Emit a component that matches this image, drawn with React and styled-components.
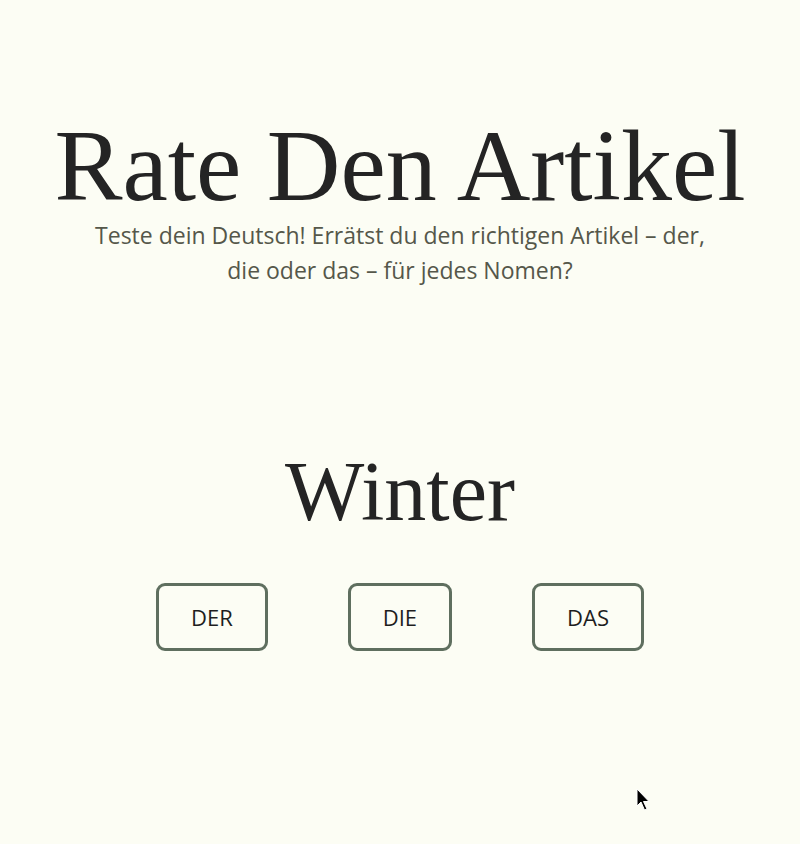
import styled, { createGlobalStyle } from "styled-components";

const GlobalStyle = createGlobalStyle`
  html, body {
    margin: 0;
    padding: 0;
    background: #fcfdf4;
  }
`;

const Page = styled.main`
  min-height: 844px;
  display: flex;
  flex-direction: column;
  align-items: center;
  padding-top: 116px;
  box-sizing: border-box;
  position: relative;
`;

const Title = styled.h1`
  margin: 0;
  font-family: "Liberation Serif", "Times New Roman", serif;
  font-weight: 400;
  font-size: 102px;
  line-height: 100px;
  color: #242424;
`;

const Subtitle = styled.p`
  margin: 2px 0 0;
  max-width: 640px;
  text-align: center;
  font-family: "Open Sans", "Noto Sans", sans-serif;
  font-size: 23px;
  line-height: 35px;
  color: #55574a;
`;

const Word = styled.h2`
  margin: 154px 0 0;
  font-family: "Liberation Serif", "Times New Roman", serif;
  font-weight: 400;
  font-size: 84px;
  line-height: 100px;
  color: #242424;
`;

const Choices = styled.div`
  display: flex;
  gap: 80px;
  margin-top: 41px;
`;

const Choice = styled.button`
  height: 68px;
  padding: 0 32px;
  border: 3px solid #5f6f5f;
  border-radius: 9px;
  background: transparent;
  font-family: "Open Sans", "Noto Sans", sans-serif;
  font-size: 22px;
  color: #1e1e1e;
  cursor: pointer;
`;

const Cursor = styled.svg`
  position: absolute;
  left: 636px;
  top: 788px;
`;

export default function App() {
  return (
    <>
      <GlobalStyle />
      <Page>
        <Title>Rate Den Artikel</Title>
        <Subtitle>
          Teste dein Deutsch! Errätst du den richtigen Artikel – der, die oder das – für jedes Nomen?
        </Subtitle>
        <Word>Winter</Word>
        <Choices>
          <Choice>DER</Choice>
          <Choice>DIE</Choice>
          <Choice>DAS</Choice>
        </Choices>
        <Cursor width="16" height="26" viewBox="0 0 16 26">
          <path d="M1 1 L1 18 L5 14 L8.5 22 L11 21 L7.5 13.5 L13 13.5 Z" fill="#000" stroke="#fff" strokeWidth="1" />
        </Cursor>
      </Page>
    </>
  );
}
